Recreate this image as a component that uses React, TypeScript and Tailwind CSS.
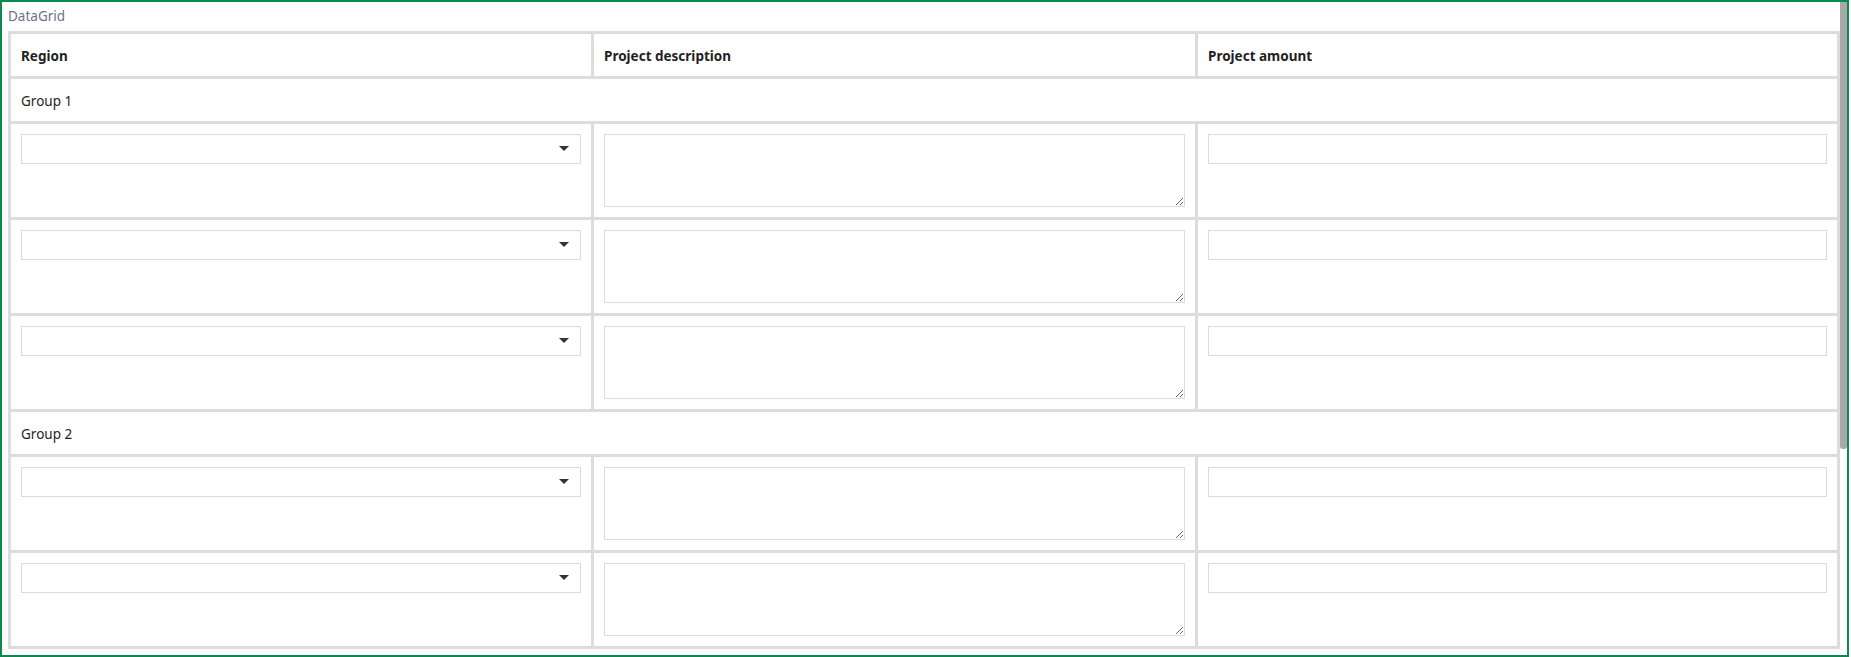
import * as React from 'react';

type Row = { kind: 'group'; label: string } | { kind: 'data'; id: number };

const rows: Row[] = [
  { kind: 'group', label: 'Group 1' },
  { kind: 'data', id: 1 },
  { kind: 'data', id: 2 },
  { kind: 'data', id: 3 },
  { kind: 'group', label: 'Group 2' },
  { kind: 'data', id: 4 },
  { kind: 'data', id: 5 },
];

const FONT = "font-['Noto_Sans','Open_Sans',sans-serif]";

function SelectBox() {
  return (
    <div className="flex h-[30px] w-full items-center justify-end border border-[#dadae6] bg-white pr-[11px]">
      <svg width="10" height="5" viewBox="0 0 10 5" className="mb-[1px] block">
        <polygon points="0,0 10,0 5,5" fill="#333333" />
      </svg>
    </div>
  );
}

export default function App() {
  return (
    <div className={`flex h-[657px] w-[1849px] border-2 border-[#0b8a4f] bg-white ${FONT}`}>
      <div className="flex w-[1838px] flex-col pl-[6px]">
        <div className="flex h-[29px] items-center text-[13.5px] text-[#6b7287]">DataGrid</div>
        <div className="grid grid-cols-[580px_601px_639px] gap-[3px] bg-[#dcdcdc] p-[3px]">
          <div className="flex h-[42px] items-center bg-white px-[10px] pt-[2px] text-[13.5px] font-bold text-[#1f1f24]">Region</div>
          <div className="flex h-[42px] items-center bg-white px-[10px] pt-[2px] text-[13.5px] font-bold text-[#1f1f24]">Project description</div>
          <div className="flex h-[42px] items-center bg-white px-[10px] pt-[2px] text-[13.5px] font-bold text-[#1f1f24]">Project amount</div>
          {rows.map((row, i) =>
            row.kind === 'group' ? (
              <div key={i} className="col-span-3 flex h-[42px] items-center bg-white px-[10px] pt-[2px] text-[13.5px] text-[#1f1f24]">
                {row.label}
              </div>
            ) : (
              <React.Fragment key={i}>
                <div className="bg-white p-[10px]">
                  <SelectBox />
                </div>
                <div className="bg-white p-[10px]">
                  <textarea className="block h-[73px] w-full border border-[#dadae6] bg-white outline-none" />
                </div>
                <div className="bg-white p-[10px]">
                  <input type="text" className="block h-[30px] w-full border border-[#dadae6] bg-white outline-none" />
                </div>
              </React.Fragment>
            )
          )}
        </div>
      </div>
      <div className="w-[7px] bg-white">
        <div className="h-[447px] w-full rounded-b-[3px] bg-[#a8a8a8]" />
      </div>
    </div>
  );
}
